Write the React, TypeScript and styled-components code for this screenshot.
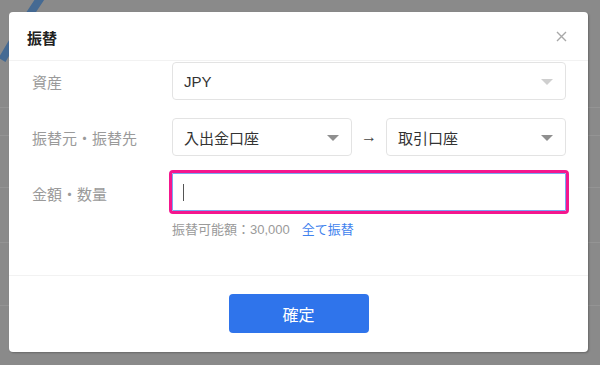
import React from 'react'
import styled, { createGlobalStyle } from 'styled-components'

const fontStack = `"Liberation Sans", "Noto Sans CJK JP", sans-serif`

const GlobalStyle = createGlobalStyle`
    html, body {
        margin: 0;
        padding: 0;
        background: #8a8a8a;
    }
    body {
        font-family: ${fontStack};
    }
`

const Page = styled.div`
    position: relative;
    width: 600px;
    height: 365px;
    overflow: hidden;
    background: #8a8a8a;
`

const Backdrop = styled.div`
    display: flex;
    flex-direction: column;
`

const BackdropRow = styled.div<{ h: number }>`
    height: ${({ h }) => h}px;
    border-bottom: 1px solid #949494;
    box-sizing: border-box;
`

const Arc = styled.svg`
    position: absolute;
    left: 0;
    top: 0;
`

const Overlay = styled.div`
    position: absolute;
    inset: 0;
    padding: 12px 12px 0 9px;
`

const Modal = styled.div`
    width: 579px;
    height: 340px;
    background: #fff;
    border-radius: 4px;
    box-shadow: 1px 1px 2px rgba(0, 0, 0, 0.25);
    display: flex;
    flex-direction: column;
    overflow: hidden;
`

const Header = styled.div`
    height: 49px;
    flex-shrink: 0;
    display: flex;
    align-items: center;
    justify-content: space-between;
    padding: 0 20px 0 18px;
    border-bottom: 1px solid #f2f2f2;
    box-sizing: border-box;
`

const Title = styled.div`
    font-size: 15px;
    font-weight: 700;
    color: #222;
    padding-top: 2px;
`

const Close = styled.button`
    border: none;
    background: transparent;
    padding: 0;
    width: 14px;
    height: 14px;
    display: flex;
    align-items: center;
    justify-content: center;
    cursor: pointer;
`

const Body = styled.div`
    flex: 1;
    display: flex;
    flex-direction: column;
    gap: 18px;
    padding: 1px 22px 0 23px;
    border-bottom: 1px solid #f2f2f2;
`

const Row = styled.div`
    display: flex;
    align-items: flex-start;
    flex-shrink: 0;
`

const Label = styled.div`
    width: 140px;
    height: 38px;
    display: flex;
    align-items: center;
    font-size: 15px;
    color: #9a9a9a;
    flex-shrink: 0;
`

const Field = styled.div`
    flex: 1;
    display: flex;
    flex-direction: column;
`

const Pair = styled.div`
    display: flex;
    align-items: center;
`

const Select = styled.div<{ muted?: boolean }>`
    flex: 1 1 0;
    height: 38px;
    min-height: 38px;
    box-sizing: border-box;
    border: 1px solid #e3e3e3;
    border-radius: 4px;
    display: flex;
    align-items: center;
    justify-content: space-between;
    padding: 0 12px 0 11px;
    font-size: 15px;
    color: #333;
    &::after {
        content: '';
        border-left: 6px solid transparent;
        border-right: 6px solid transparent;
        border-top: 6px solid ${({ muted }) => (muted ? '#cfcfcf' : '#8f8f8f')};
        margin-top: 1px;
    }
`

const Arrow = styled.span`
    width: 34px;
    text-align: center;
    font-size: 16px;
    color: #444;
`

const AmountInput = styled.div`
    height: 38px;
    flex-shrink: 0;
    margin-top: -1px;
    box-sizing: border-box;
    border: 1px solid #7aa7f0;
    border-radius: 1px;
    outline: 3px solid #f4168e;
    outline-offset: 0;
    display: flex;
    align-items: center;
    padding-left: 10px;
`

const Caret = styled.span`
    width: 1px;
    height: 17px;
    background: #555;
`

const Hint = styled.div`
    margin-top: 8px;
    font-size: 13px;
    color: #9a9a9a;
    display: flex;
    gap: 12px;
`

const Link = styled.a`
    color: #3f82ee;
    text-decoration: none;
`

const Footer = styled.div`
    height: 76px;
    flex-shrink: 0;
    display: flex;
    justify-content: center;
    align-items: flex-start;
    padding-top: 18px;
    box-sizing: border-box;
`

const Confirm = styled.button`
    width: 140px;
    height: 39px;
    border: none;
    border-radius: 4px;
    background: #2f74eb;
    color: #fff;
    font-family: ${fontStack};
    font-size: 16px;
    cursor: pointer;
`

const App = () => {
    return (
        <Page>
            <GlobalStyle />
            <Backdrop>
                <BackdropRow h={108} />
                <BackdropRow h={28} />
                <BackdropRow h={52} />
                <BackdropRow h={55} />
                <BackdropRow h={63} />
            </Backdrop>
            <Arc width="60" height="70" viewBox="0 0 60 70">
                <path d="M42 -4 Q24 22 2 60" stroke="#456a93" strokeWidth="8" fill="none" />
            </Arc>
            <Overlay>
                <Modal>
                    <Header>
                        <Title>振替</Title>
                        <Close aria-label="close">
                            <svg width="11" height="11" viewBox="0 0 11 11">
                                <path d="M1 1L10 10M10 1L1 10" stroke="#a8a8a8" strokeWidth="1.4" />
                            </svg>
                        </Close>
                    </Header>
                    <Body>
                        <Row>
                            <Label>資産</Label>
                            <Field>
                                <Select muted>JPY</Select>
                            </Field>
                        </Row>
                        <Row>
                            <Label>振替元・振替先</Label>
                            <Field>
                                <Pair>
                                    <Select>入出金口座</Select>
                                    <Arrow>→</Arrow>
                                    <Select>取引口座</Select>
                                </Pair>
                            </Field>
                        </Row>
                        <Row>
                            <Label>金額・数量</Label>
                            <Field>
                                <AmountInput>
                                    <Caret />
                                </AmountInput>
                                <Hint>
                                    <span>振替可能額：30,000</span>
                                    <Link href="#">全て振替</Link>
                                </Hint>
                            </Field>
                        </Row>
                    </Body>
                    <Footer>
                        <Confirm>確定</Confirm>
                    </Footer>
                </Modal>
            </Overlay>
        </Page>
    )
}

export default App
